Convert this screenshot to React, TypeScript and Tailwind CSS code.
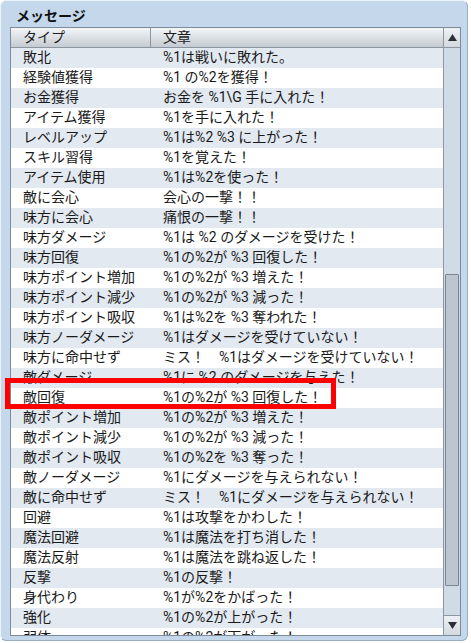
const rows: [string, string][] = [
  ["敗北", "%1は戦いに敗れた。"],
  ["経験値獲得", "%1 の%2を獲得！"],
  ["お金獲得", "お金を %1\\G 手に入れた！"],
  ["アイテム獲得", "%1を手に入れた！"],
  ["レベルアップ", "%1は%2 %3 に上がった！"],
  ["スキル習得", "%1を覚えた！"],
  ["アイテム使用", "%1は%2を使った！"],
  ["敵に会心", "会心の一撃！！"],
  ["味方に会心", "痛恨の一撃！！"],
  ["味方ダメージ", "%1は %2 のダメージを受けた！"],
  ["味方回復", "%1の%2が %3 回復した！"],
  ["味方ポイント増加", "%1の%2が %3 増えた！"],
  ["味方ポイント減少", "%1の%2が %3 減った！"],
  ["味方ポイント吸収", "%1は%2を %3 奪われた！"],
  ["味方ノーダメージ", "%1はダメージを受けていない！"],
  ["味方に命中せず", "ミス！　%1はダメージを受けていない！"],
  ["敵ダメージ", "%1に %2 のダメージを与えた！"],
  ["敵回復", "%1の%2が %3 回復した！"],
  ["敵ポイント増加", "%1の%2が %3 増えた！"],
  ["敵ポイント減少", "%1の%2が %3 減った！"],
  ["敵ポイント吸収", "%1の%2を %3 奪った！"],
  ["敵ノーダメージ", "%1にダメージを与えられない！"],
  ["敵に命中せず", "ミス！　%1にダメージを与えられない！"],
  ["回避", "%1は攻撃をかわした！"],
  ["魔法回避", "%1は魔法を打ち消した！"],
  ["魔法反射", "%1は魔法を跳ね返した！"],
  ["反撃", "%1の反撃！"],
  ["身代わり", "%1が%2をかばった！"],
  ["強化", "%1の%2が上がった！"],
  ["弱体", "%1の%2が下がった！"],
];

function ArrowButton({ up }: { up: boolean }) {
  return (
    <div
      className={
        "h-[20px] shrink-0 flex items-center justify-center bg-gradient-to-b from-[#eef1f4] to-[#d3d9df] border-[#8d97a1] " +
        (up ? "border-b" : "border-t")
      }
    >
      <svg width="9" height="7" viewBox="0 0 9 7">
        {up ? (
          <polygon points="4.5,0 9,7 0,7" fill="#2a2f36" />
        ) : (
          <polygon points="0,0 9,0 4.5,7" fill="#2a2f36" />
        )}
      </svg>
    </div>
  );
}

export default function App() {
  return (
    <div
      className="w-[471px] h-[643px] bg-white relative overflow-hidden"
      style={{ fontFamily: '"Liberation Sans Narrow", Roboto, "Noto Sans CJK JP", sans-serif' }}
    >
      <div className="w-[468px] h-[641px] bg-[#c4d7eb] rounded-[6px] border border-[#eaf2fa] border-r-[#98adc2] border-b-[#98adc2] flex flex-col pl-[9px] pr-[6px] pb-[4px]">
        <div
          className="h-[26px] pl-[6px] pt-[4px] text-[14px] font-bold leading-[20px] text-[#111]"
          style={{ fontFamily: '"Noto Sans CJK JP", sans-serif' }}
        >
          メッセージ
        </div>
        <div className="flex-1 flex border border-[#7d8b99] bg-white overflow-hidden">
          <div className="flex-1 flex flex-col overflow-hidden">
            <div className="h-[20px] shrink-0 flex bg-gradient-to-b from-[#f4f6f8] to-[#c4cbd2] border-b border-[#8b959f] text-[14px] leading-[18px] text-[#1e1e1e]">
              <div className="w-[140px] pl-[12px] border-r border-[#8b959f]">タイプ</div>
              <div className="pl-[12px]">文章</div>
            </div>
            {rows.map(([type, text], i) => (
              <div
                key={type}
                className={
                  "h-[20px] shrink-0 flex text-[14px] leading-[18px] text-[#1a1a1a] whitespace-pre " +
                  (i % 2 === 0 ? "bg-[#e2e9f1]" : "bg-white")
                }
              >
                <div className="w-[140px] pl-[12px]">{type}</div>
                <div className="pl-[12px]">{text}</div>
              </div>
            ))}
          </div>
          <div className="w-[17px] flex flex-col border-l border-[#8d97a1] bg-[#cfdbe7]">
            <ArrowButton up />
            <div className="flex-1">
              <div className="mt-[226px] mx-[1px] h-[312px] bg-[#bcc6d2] border border-[#7b8590] rounded-[1px]" />
            </div>
            <ArrowButton up={false} />
          </div>
        </div>
      </div>
      <div className="absolute left-[5px] top-[378px] w-[331px] h-[31px] border-[5px] border-[#ff0000]" />
    </div>
  );
}
